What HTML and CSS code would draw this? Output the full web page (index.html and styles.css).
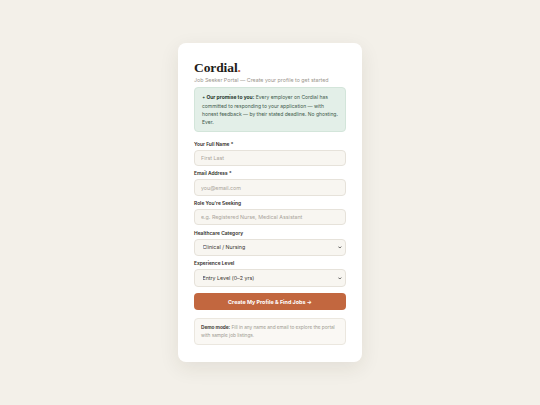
FILE: index.html
```html
<!DOCTYPE html><html lang="en"><head><meta charset="UTF-8"><title>Cordial • Job Seeker Portal</title>
<link rel="stylesheet" href="styles.css">
</head><body>

<main class="wrap">
  <section class="card">
    <h1 class="logo">Cordial<span class="dot">.</span></h1>
    <p class="sub">Job Seeker Portal — Create your profile to get started</p>

    <div class="promise">
      <span class="spark">✦</span> <strong>Our promise to you:</strong> Every employer on Cordial has committed to responding to your application — with honest feedback — by their stated deadline. No ghosting. Ever.
    </div>

    <form class="form" onsubmit="return false">
      <label class="field">
        <span class="lbl">Your Full Name *</span>
        <input type="text" placeholder="First Last">
      </label>
      <label class="field">
        <span class="lbl">Email Address *</span>
        <input type="email" placeholder="you@email.com">
      </label>
      <label class="field">
        <span class="lbl">Role You're Seeking</span>
        <input type="text" placeholder="e.g. Registered Nurse, Medical Assistant">
      </label>
      <label class="field">
        <span class="lbl">Healthcare Category</span>
        <span class="sel">
          <select>
            <option>Clinical / Nursing</option>
            <option>Allied Health</option>
            <option>Administrative</option>
          </select>
          <svg class="chev" viewBox="0 0 10 6"><path d="M1 1l4 4 4-4" fill="none" stroke="#333" stroke-width="2.2"/></svg>
        </span>
      </label>
      <label class="field">
        <span class="lbl">Experience Level</span>
        <span class="sel">
          <select>
            <option>Entry Level (0–2 yrs)</option>
            <option>Mid Level (3–5 yrs)</option>
            <option>Senior (6+ yrs)</option>
          </select>
          <svg class="chev" viewBox="0 0 10 6"><path d="M1 1l4 4 4-4" fill="none" stroke="#333" stroke-width="2.2"/></svg>
        </span>
      </label>

      <button class="go" type="submit">Create My Profile &amp; Find Jobs →</button>
    </form>

    <div class="demo">
      <strong>Demo mode:</strong> Fill in any name and email to explore the portal with sample job listings.
    </div>
  </section>
</main>

</body></html>
```

FILE: styles.css
```css
*{box-sizing:border-box;margin:0;padding:0}
body{font-family:Inter,'Noto Sans',sans-serif;background:#f3f0e9;color:#2c2925}
.wrap{min-height:100vh;display:flex;align-items:center;justify-content:center}
.card{width:184px;background:#fff;border-radius:8px;padding:18px 16px 17px;box-shadow:0 6px 20px rgba(60,45,20,.09)}
/* header */
.logo{font-family:'Liberation Serif',serif;font-weight:700;font-size:13.5px;line-height:14px;color:#1f1c19;letter-spacing:-.1px}
.logo .dot{color:#c8623a}
.sub{font-size:5.3px;line-height:8px;color:#9a958d;margin-top:1px;white-space:nowrap}
/* promise */
.promise{margin-top:3px;background:#e3efe8;border:1px solid #d3e5da;border-radius:4px;padding:5px 7px;font-size:5px;line-height:8px;color:#3e5a4b}
.promise strong{color:#26382e;font-weight:700}
.spark{font-size:4px}
/* form */
.form{margin-top:9px;display:flex;flex-direction:column}
.field{display:flex;flex-direction:column;gap:2px;margin-bottom:4.3px}
.lbl{display:block;font-size:4.9px;line-height:7px;font-weight:600;color:#2f2b27}
input,select{display:block;width:100%;font-family:inherit;font-size:5.3px;color:#3a3631;background:#f8f6f1;border:1px solid #e6e2da;border-radius:4px;outline:none}
input{height:16.4px;padding:0 6px}
input::placeholder{color:#aaa59c}
.sel{position:relative;display:flex}
select{height:17.3px;padding:0 7.5px;appearance:none;-webkit-appearance:none}
.chev{position:absolute;right:4px;top:7.3px;width:3.6px;height:2.6px}
.go{margin-top:2px;height:17.4px;border:none;border-radius:4px;background:#c2673f;color:#fff;font-family:inherit;font-size:5.4px;font-weight:700;cursor:pointer}
/* demo */
.demo{margin-top:7.6px;background:#faf8f4;border:1px solid #ebe7df;border-radius:4px;padding:5px 6px;font-size:4.8px;line-height:7.7px;color:#a19c93;letter-spacing:-.04px}
.demo strong{color:#4a4540;font-weight:700}
```
